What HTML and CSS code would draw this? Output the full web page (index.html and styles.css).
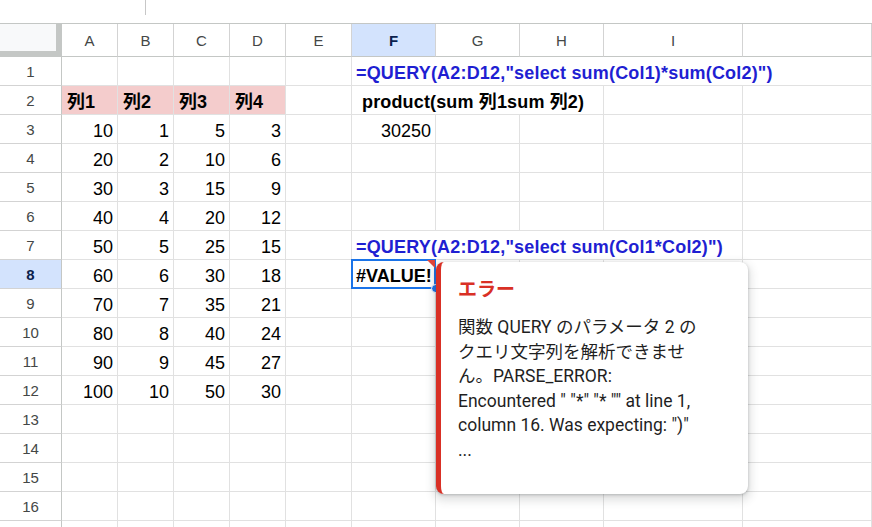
FILE: index.html
```html
<!DOCTYPE html>
<html lang="ja">
<head>
<meta charset="utf-8">
<title>Sheet</title>
<link rel="stylesheet" href="styles.css">
</head>
<body>
<div class="sheet">
  <div class="topbar"><div class="topbar-divider"></div></div>
  <div class="grid">
    <div class="corner"></div>
    <div class="ch">A</div><div class="ch">B</div><div class="ch">C</div><div class="ch">D</div><div class="ch">E</div><div class="ch ch-sel">F</div><div class="ch">G</div><div class="ch">H</div><div class="ch">I</div><div class="ch"></div>

    <div class="rh">1</div><div class="c"></div><div class="c"></div><div class="c"></div><div class="c"></div><div class="c"></div><div class="c fx span5">=QUERY(A2:D12,"select sum(Col1)*sum(Col2)")</div>

    <div class="rh">2</div><div class="c hd">列1</div><div class="c hd">列2</div><div class="c hd">列3</div><div class="c hd">列4</div><div class="c"></div><div class="c bold span3 label">product(sum 列1sum 列2)</div><div class="c"></div><div class="c"></div>

    <div class="rh">3</div><div class="c num">10</div><div class="c num">1</div><div class="c num">5</div><div class="c num">3</div><div class="c"></div><div class="c num">30250</div><div class="c"></div><div class="c"></div><div class="c"></div><div class="c"></div>

    <div class="rh">4</div><div class="c num">20</div><div class="c num">2</div><div class="c num">10</div><div class="c num">6</div><div class="c"></div><div class="c"></div><div class="c"></div><div class="c"></div><div class="c"></div><div class="c"></div>

    <div class="rh">5</div><div class="c num">30</div><div class="c num">3</div><div class="c num">15</div><div class="c num">9</div><div class="c"></div><div class="c"></div><div class="c"></div><div class="c"></div><div class="c"></div><div class="c"></div>

    <div class="rh">6</div><div class="c num">40</div><div class="c num">4</div><div class="c num">20</div><div class="c num">12</div><div class="c"></div><div class="c"></div><div class="c"></div><div class="c"></div><div class="c"></div><div class="c"></div>

    <div class="rh">7</div><div class="c num">50</div><div class="c num">5</div><div class="c num">25</div><div class="c num">15</div><div class="c"></div><div class="c fx span4">=QUERY(A2:D12,"select sum(Col1*Col2)")</div><div class="c"></div>

    <div class="rh rh-sel">8</div><div class="c num">60</div><div class="c num">6</div><div class="c num">30</div><div class="c num">18</div><div class="c"></div><div class="c bold selected">#VALUE!<span class="err-mark"></span><span class="handle"></span></div><div class="c"></div><div class="c"></div><div class="c"></div><div class="c"></div>

    <div class="rh">9</div><div class="c num">70</div><div class="c num">7</div><div class="c num">35</div><div class="c num">21</div><div class="c"></div><div class="c"></div><div class="c"></div><div class="c"></div><div class="c"></div><div class="c"></div>

    <div class="rh">10</div><div class="c num">80</div><div class="c num">8</div><div class="c num">40</div><div class="c num">24</div><div class="c"></div><div class="c"></div><div class="c"></div><div class="c"></div><div class="c"></div><div class="c"></div>

    <div class="rh">11</div><div class="c num">90</div><div class="c num">9</div><div class="c num">45</div><div class="c num">27</div><div class="c"></div><div class="c"></div><div class="c"></div><div class="c"></div><div class="c"></div><div class="c"></div>

    <div class="rh">12</div><div class="c num">100</div><div class="c num">10</div><div class="c num">50</div><div class="c num">30</div><div class="c"></div><div class="c"></div><div class="c"></div><div class="c"></div><div class="c"></div><div class="c"></div>

    <div class="rh">13</div><div class="c"></div><div class="c"></div><div class="c"></div><div class="c"></div><div class="c"></div><div class="c"></div><div class="c"></div><div class="c"></div><div class="c"></div><div class="c"></div>

    <div class="rh">14</div><div class="c"></div><div class="c"></div><div class="c"></div><div class="c"></div><div class="c"></div><div class="c"></div><div class="c"></div><div class="c"></div><div class="c"></div><div class="c"></div>

    <div class="rh">15</div><div class="c"></div><div class="c"></div><div class="c"></div><div class="c"></div><div class="c"></div><div class="c"></div><div class="c"></div><div class="c"></div><div class="c"></div><div class="c"></div>

    <div class="rh">16</div><div class="c"></div><div class="c"></div><div class="c"></div><div class="c"></div><div class="c"></div><div class="c"></div><div class="c"></div><div class="c"></div><div class="c"></div><div class="c"></div>

    <div class="rh"></div><div class="c"></div><div class="c"></div><div class="c"></div><div class="c"></div><div class="c"></div><div class="c"></div><div class="c"></div><div class="c"></div><div class="c"></div><div class="c"></div>
  </div>

  <div class="tip">
    <div class="tip-title">エラー</div>
    <div class="tip-body">関数 QUERY のパラメータ 2 のクエリ文字列を解析できません。PARSE_ERROR: Encountered " "*" "* "" at line 1, column 16. Was expecting: ")"<br>...</div>
  </div>
</div>
</body>
</html>
```

FILE: styles.css
```css
* { box-sizing: border-box; }

html, body {
  margin: 0;
  padding: 0;
  background: #ffffff;
  overflow: hidden;
}

body {
  width: 872px;
  height: 527px;
  font-family: "Liberation Sans", "Noto Sans CJK JP", Arial, sans-serif;
}

.sheet {
  position: relative;
  width: 872px;
  height: 527px;
  overflow: hidden;
}

.topbar {
  height: 23px;
  background: #ffffff;
}

.topbar-divider {
  margin-left: 145px;
  width: 1px;
  height: 15px;
  background: #c7c7c7;
}

.grid {
  display: grid;
  grid-template-columns: 62px 56px 56px 56px 56px 66px 84px 84px 84px 139px 1fr;
  grid-template-rows: 33px;
  grid-auto-rows: 29px;
  border-top: 1px solid #c4c7c5;
}

.corner {
  background: #f8f9fa;
  border-right: 6px solid #c4c7c5;
  border-bottom: 6px solid #c4c7c5;
}

.ch {
  display: flex;
  align-items: center;
  justify-content: center;
  font-size: 15px;
  color: #444746;
  border-right: 1px solid #d3d3d3;
  border-bottom: 1px solid #c4c7c5;
  padding-top: 1px;
}

.ch-sel {
  background: #d3e3fd;
  color: #0b1f4d;
  font-weight: bold;
}

.rh {
  display: flex;
  align-items: center;
  justify-content: center;
  font-size: 15px;
  color: #444746;
  border-right: 1px solid #c4c7c5;
  border-bottom: 1px solid #d3d3d3;
}

.rh-sel {
  background: #d3e3fd;
  color: #0b1f4d;
  font-weight: bold;
}

.c {
  position: relative;
  display: flex;
  align-items: flex-end;
  font-size: 18px;
  line-height: 20px;
  color: #000000;
  padding: 0 4px 2px 4px;
  border-right: 1px solid #e1e1e1;
  border-bottom: 1px solid #e1e1e1;
  white-space: nowrap;
}

.num {
  justify-content: flex-end;
}

.hd {
  background: #f4cccc;
  font-weight: bold;
  padding-left: 5px;
}

.bold {
  font-weight: bold;
}

.label {
  padding-left: 10px;
  letter-spacing: 0.15px;
}

.fx {
  color: #1f1fd2;
  font-weight: bold;
  letter-spacing: 0.18px;
}

.span3 { grid-column: span 3; }
.span4 { grid-column: span 4; }
.span5 { grid-column: span 5; }

.selected::before {
  content: "";
  position: absolute;
  left: -1px;
  top: -1px;
  right: -1px;
  bottom: -1px;
  border: 2px solid #1a73e8;
  pointer-events: none;
}

.err-mark {
  position: absolute;
  top: 0;
  right: 0;
  width: 0;
  height: 0;
  border-top: 8px solid #e0453a;
  border-left: 8px solid transparent;
}

.handle {
  position: absolute;
  right: -5px;
  bottom: -5px;
  width: 9px;
  height: 9px;
  border-radius: 50%;
  background: #1a73e8;
  border: 1px solid #ffffff;
  z-index: 1;
}

.tip {
  position: absolute;
  left: 436px;
  top: 262px;
  width: 312px;
  height: 232px;
  padding: 16px 42px 0 17px;
  background: #ffffff;
  border-left: 5px solid #d93025;
  border-radius: 8px;
  box-shadow: 0 1px 3px rgba(60, 64, 67, 0.3), 0 4px 8px 3px rgba(60, 64, 67, 0.15);
  font-family: Roboto, "Noto Sans CJK JP", sans-serif;
  z-index: 2;
}

.tip-title {
  font-size: 19px;
  line-height: 24px;
  font-weight: bold;
  color: #d93025;
}

.tip-body {
  margin-top: 13px;
  font-size: 17.5px;
  line-height: 24.5px;
  color: #1f1f1f;
}
```
